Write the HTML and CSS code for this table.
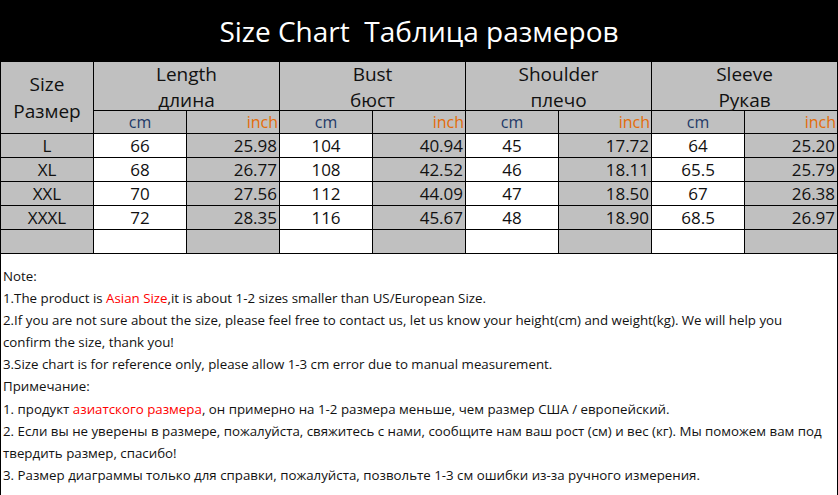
FILE: index.html
```html
<!DOCTYPE html>
<html lang="ru">
<head>
<meta charset="utf-8">
<title>Size Chart</title>
<link rel="stylesheet" href="styles.css">
</head>
<body>
<div class="page">
  <header class="title-bar">
    <h1 class="title">Size Chart&nbsp;&nbsp;Таблица размеров</h1>
  </header>
  <table class="chart">
    <colgroup>
      <col class="c"><col class="c"><col class="c"><col class="c"><col class="c"><col class="c"><col class="c"><col class="c"><col class="c">
    </colgroup>
    <thead>
      <tr class="head-row">
        <th rowspan="2" class="size-head">Size<br>Размер</th>
        <th colspan="2"><div class="hd">Length<br>длина</div></th>
        <th colspan="2"><div class="hd">Bust<br>бюст</div></th>
        <th colspan="2"><div class="hd">Shoulder<br>плечо</div></th>
        <th colspan="2"><div class="hd">Sleeve<br>Рукав</div></th>
      </tr>
      <tr class="unit-row">
        <th class="cm">cm</th><th class="inch">inch</th>
        <th class="cm">cm</th><th class="inch">inch</th>
        <th class="cm">cm</th><th class="inch">inch</th>
        <th class="cm">cm</th><th class="inch">inch</th>
      </tr>
    </thead>
    <tbody>
      <tr>
        <td class="sz">L</td>
        <td class="v">66</td><td class="i">25.98</td>
        <td class="v">104</td><td class="i">40.94</td>
        <td class="v">45</td><td class="i">17.72</td>
        <td class="v">64</td><td class="i">25.20</td>
      </tr>
      <tr>
        <td class="sz">XL</td>
        <td class="v">68</td><td class="i">26.77</td>
        <td class="v">108</td><td class="i">42.52</td>
        <td class="v">46</td><td class="i">18.11</td>
        <td class="v">65.5</td><td class="i">25.79</td>
      </tr>
      <tr>
        <td class="sz">XXL</td>
        <td class="v">70</td><td class="i">27.56</td>
        <td class="v">112</td><td class="i">44.09</td>
        <td class="v">47</td><td class="i">18.50</td>
        <td class="v">67</td><td class="i">26.38</td>
      </tr>
      <tr>
        <td class="sz">XXXL</td>
        <td class="v">72</td><td class="i">28.35</td>
        <td class="v">116</td><td class="i">45.67</td>
        <td class="v">48</td><td class="i">18.90</td>
        <td class="v">68.5</td><td class="i">26.97</td>
      </tr>
      <tr>
        <td class="sz"></td>
        <td class="v"></td><td class="i"></td>
        <td class="v"></td><td class="i"></td>
        <td class="v"></td><td class="i"></td>
        <td class="v"></td><td class="i"></td>
      </tr>
    </tbody>
  </table>
  <section class="notes">
    <p>Note:</p>
    <p>1.The product is <span class="red">Asian Size</span>,it is about 1-2 sizes smaller than US/European Size.</p>
    <p>2.If you are not sure about the size, please feel free to contact us, let us know your height(cm) and weight(kg). We will help you confirm the size, thank you!</p>
    <p>3.Size chart is for reference only, please allow 1-3 cm error due to manual measurement.</p>
    <p>Примечание:</p>
    <p>1. продукт <span class="red">азиатского размера</span>, он примерно на 1-2 размера меньше, чем размер США / европейский.</p>
    <p>2. Если вы не уверены в размере, пожалуйста, свяжитесь с нами, сообщите нам ваш рост (см) и вес (кг). Мы поможем вам под твердить размер, спасибо!</p>
    <p>3. Размер диаграммы только для справки, пожалуйста, позвольте 1-3 см ошибки из-за ручного измерения.</p>
  </section>
</div>
</body>
</html>
```

FILE: styles.css
```css
html, body {
  margin: 0;
  padding: 0;
  background: #fff;
}

.page {
  width: 838px;
  font-family: "Open Sans", "Noto Sans", sans-serif;
  color: #111;
}

.title-bar {
  height: 61px;
  background: #000;
  display: flex;
  align-items: center;
  justify-content: center;
}

.title {
  margin: 0;
  font-weight: 400;
  font-size: 28px;
  color: #fff;
  line-height: 1;
  padding-left: 0;
}

.chart {
  width: 838px;
  table-layout: fixed;
  border-collapse: collapse;
}

.chart .c {
  width: 93px;
}

.chart th,
.chart td {
  border: 1px solid #000;
  padding: 0;
  font-weight: 400;
  background: #c0c0c0;
  white-space: nowrap;
  overflow: hidden;
}

.head-row th {
  height: 48px;
  font-size: 19px;
  text-align: center;
  vertical-align: top;
  overflow: visible;
}

.hd {
  height: 48px;
  line-height: 26px;
  margin-top: -1px;
}

.head-row th.size-head {
  vertical-align: middle;
  line-height: 27px;
  padding-top: 0;
}

.unit-row th {
  height: 22px;
  font-size: 16px;
  line-height: 22px;
}

.unit-row th.cm {
  color: #1f3a68;
  text-align: center;
}

.unit-row th.inch {
  color: #e46c0a;
  text-align: right;
  padding-right: 1px;
}

.chart tbody td {
  height: 23px;
  font-size: 17px;
  line-height: 22px;
}

.chart td.sz {
  text-align: center;
}

.chart td.v {
  background: #fff;
  text-align: center;
}

.chart td.i {
  text-align: right;
  padding-right: 2px;
}

.notes {
  border-left: 1px solid #000;
  border-right: 1px solid #000;
  padding: 11px 8px 0 2px;
  height: 240px;
  font-size: 13.3px;
  line-height: 22.1px;
  color: #111;
}

.notes p {
  margin: 0;
}

.red {
  color: #f00;
}
```
